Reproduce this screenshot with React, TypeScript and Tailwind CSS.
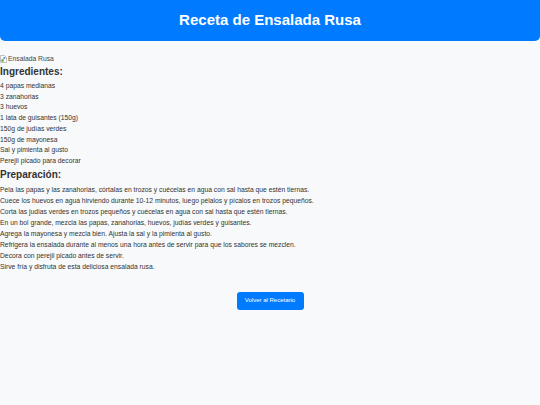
const ingredientes = [
  '4 papas medianas',
  '3 zanahorias',
  '3 huevos',
  '1 lata de guisantes (150g)',
  '150g de judías verdes',
  '150g de mayonesa',
  'Sal y pimienta al gusto',
  'Perejil picado para decorar',
]

const pasos = [
  'Pela las papas y las zanahorias, córtalas en trozos y cuécelas en agua con sal hasta que estén tiernas.',
  'Cuece los huevos en agua hirviendo durante 10-12 minutos, luego pélalos y pícalos en trozos pequeños.',
  'Corta las judías verdes en trozos pequeños y cuécelas en agua con sal hasta que estén tiernas.',
  'En un bol grande, mezcla las papas, zanahorias, huevos, judías verdes y guisantes.',
  'Agrega la mayonesa y mezcla bien. Ajusta la sal y la pimienta al gusto.',
  'Refrigera la ensalada durante al menos una hora antes de servir para que los sabores se mezclen.',
  'Decora con perejil picado antes de servir.',
  'Sirve fría y disfruta de esta deliciosa ensalada rusa.',
]

function BrokenImage() {
  return (
    <svg width="7" height="8" viewBox="0 0 7 8" className="shrink-0">
      <path d="M0.5 0.5h4l2 2v5h-6z" fill="#fff" stroke="#999" strokeWidth="0.6" />
      <rect x="1.3" y="4.2" width="2.5" height="2.5" fill="#6ab04c" />
      <rect x="3.3" y="2" width="2" height="2" fill="#5d9cec" />
    </svg>
  )
}

export default function App() {
  return (
    <div className="min-h-[405px] w-full bg-[#f8f9fa] text-[#333] font-['Liberation_Sans',Arial,sans-serif]">
      <header className="h-[41px] bg-[#007bff] rounded-b-[5px] flex items-center justify-center">
        <h1 className="text-white text-[15px] font-bold">Receta de Ensalada Rusa</h1>
      </header>

      <div className="mt-[13px] flex items-center gap-[1px] text-[6.75px] leading-[10px] text-[#444]">
        <BrokenImage />
        <span>Ensalada Rusa</span>
      </div>

      <h2 className="text-[10px] font-bold leading-[14px] mt-[1px]">Ingredientes:</h2>
      <ul className="mt-[2px] text-[6.75px] leading-[10.7px]">
        {ingredientes.map((item) => (
          <li key={item}>{item}</li>
        ))}
      </ul>

      <h2 className="text-[10px] font-bold leading-[14px] mt-[1px]">Preparación:</h2>
      <ol className="mt-[2px] text-[6.75px] leading-[11px]">
        {pasos.map((paso) => (
          <li key={paso}>{paso}</li>
        ))}
      </ol>

      <div className="flex justify-center mt-[20px]">
        <button className="bg-[#007bff] text-white text-[6px] rounded-[3px] w-[67px] h-[18px]">
          Volver al Recetario
        </button>
      </div>
    </div>
  )
}
